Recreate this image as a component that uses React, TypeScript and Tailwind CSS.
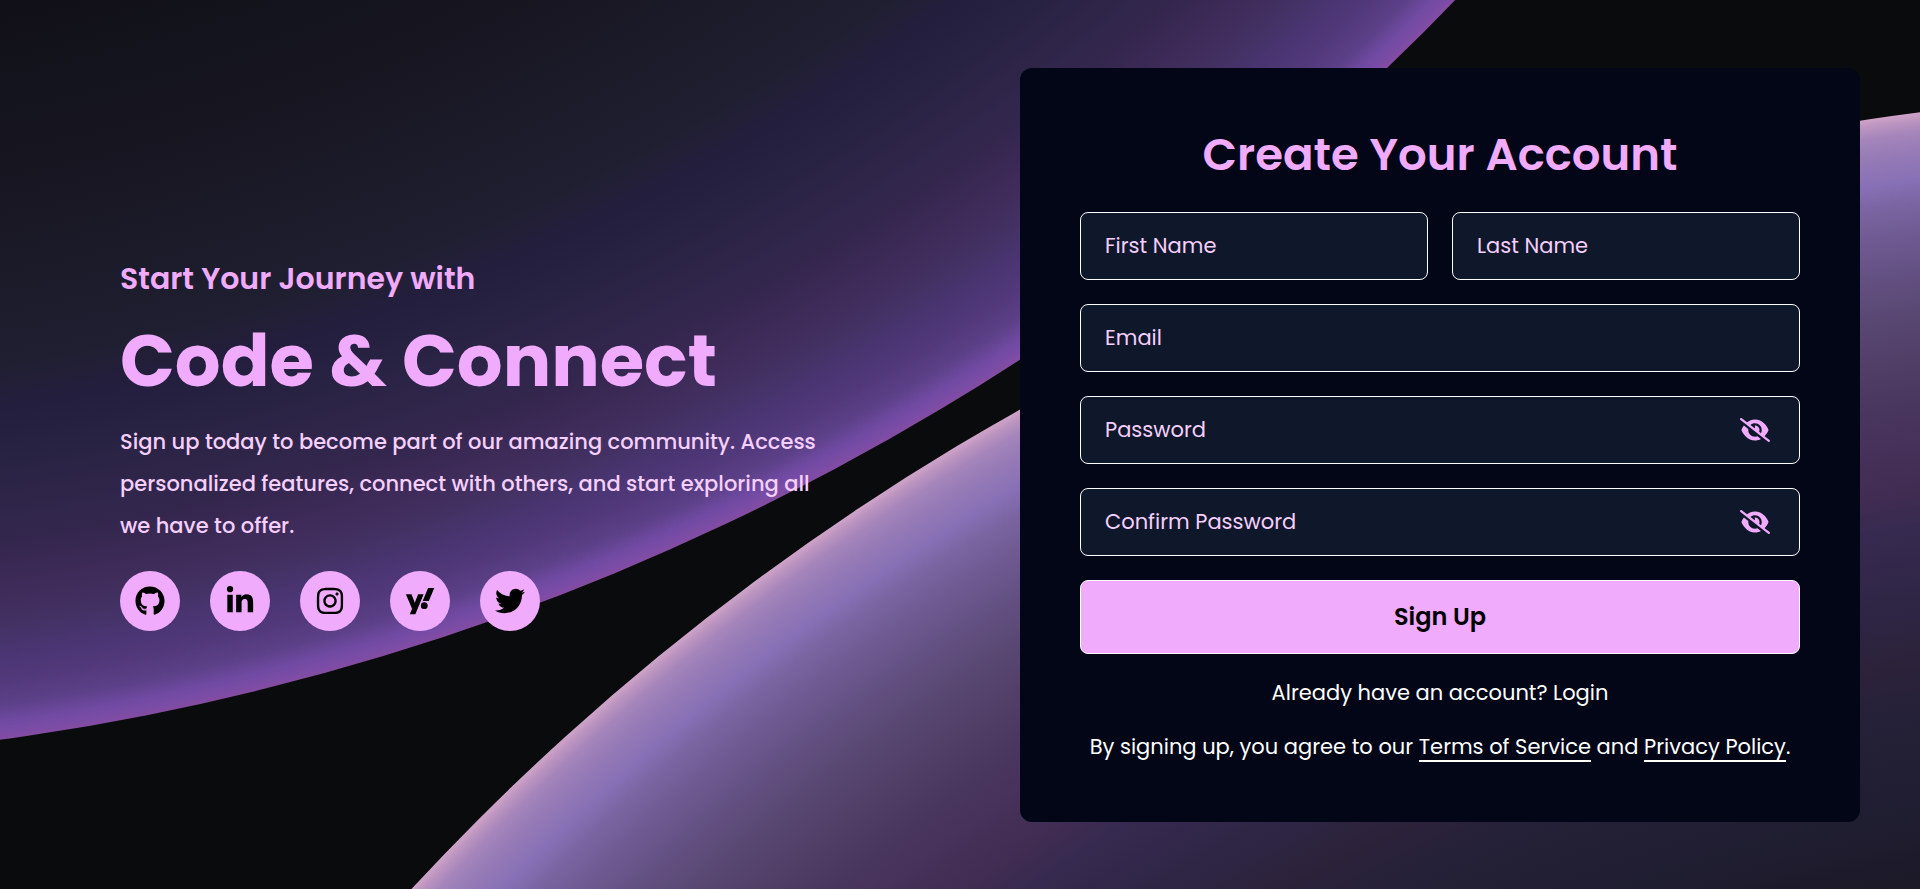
import { useState } from "react";
import {
  FaEyeSlash,
  FaEye,
  FaGithub,
  FaLinkedinIn,
  FaInstagram,
  FaYahoo,
  FaTwitter,
} from "react-icons/fa6";

const socials = [
  { label: "GitHub", Icon: FaGithub },
  { label: "LinkedIn", Icon: FaLinkedinIn },
  { label: "Instagram", Icon: FaInstagram },
  { label: "Yahoo", Icon: FaYahoo },
  { label: "Twitter", Icon: FaTwitter },
];

function Backdrop() {
  return (
    <svg
      aria-hidden="true"
      className="absolute inset-0 -z-10 h-full w-full"
      viewBox="0 0 1920 889"
      preserveAspectRatio="xMidYMid slice"
    >
      <defs>
        <radialGradient id="upper" gradientUnits="userSpaceOnUse" cx="-339" cy="-1728" r="2491">
          <stop offset="0.7" stopColor="#100e15" />
          <stop offset="0.742" stopColor="#13141d" />
          <stop offset="0.775" stopColor="#171520" />
          <stop offset="0.812" stopColor="#1b1a28" />
          <stop offset="0.852" stopColor="#201f32" />
          <stop offset="0.868" stopColor="#241e3e" />
          <stop offset="0.89" stopColor="#292343" />
          <stop offset="0.925" stopColor="#35274f" />
          <stop offset="0.9366" stopColor="#3d2a57" />
          <stop offset="0.954" stopColor="#433163" />
          <stop offset="0.9655" stopColor="#4a3572" />
          <stop offset="0.9755" stopColor="#51387a" />
          <stop offset="0.986" stopColor="#5c4088" />
          <stop offset="0.993" stopColor="#704aa2" />
          <stop offset="0.9975" stopColor="#7b4ca6" />
          <stop offset="1" stopColor="#844ca0" />
        </radialGradient>
        <radialGradient id="lower" gradientUnits="userSpaceOnUse" cx="2236" cy="2579" r="2487">
          <stop offset="0.687" stopColor="#1b1926" />
          <stop offset="0.721" stopColor="#1f1d30" />
          <stop offset="0.762" stopColor="#252138" />
          <stop offset="0.782" stopColor="#2c223a" />
          <stop offset="0.8" stopColor="#2d2543" />
          <stop offset="0.836" stopColor="#372a50" />
          <stop offset="0.849" stopColor="#412c52" />
          <stop offset="0.883" stopColor="#49365f" />
          <stop offset="0.917" stopColor="#57466f" />
          <stop offset="0.936" stopColor="#635082" />
          <stop offset="0.952" stopColor="#6f5b92" />
          <stop offset="0.964" stopColor="#7a65a2" />
          <stop offset="0.973" stopColor="#8770b5" />
          <stop offset="0.984" stopColor="#957ab6" />
          <stop offset="0.992" stopColor="#a585bb" />
          <stop offset="0.997" stopColor="#bd95c0" />
          <stop offset="1" stopColor="#cfa4c8" />
        </radialGradient>
      </defs>
      <rect width="1920" height="889" fill="#0a0b0d" />
      <circle cx="-339" cy="-1728" r="2491" fill="url(#upper)" />
      <circle cx="2236" cy="2579" r="2487" fill="url(#lower)" />
    </svg>
  );
}

const fieldClass =
  "block h-[68px] w-full rounded-lg border border-white bg-[#0f172a] px-6 text-[21px] text-[#f5d0fe] placeholder:text-[#f5d0fe] placeholder:opacity-100 outline-none focus:border-[#f0abfc]";

function Field({ label, type = "text" }: { label: string; type?: string }) {
  return <input type={type} aria-label={label} placeholder={label} className={fieldClass} />;
}

function PasswordField({ label }: { label: string }) {
  const [visible, setVisible] = useState(false);
  const Icon = visible ? FaEye : FaEyeSlash;
  return (
    <div className="relative">
      <Field label={label} type={visible ? "text" : "password"} />
      <button
        type="button"
        aria-label={visible ? "Hide password" : "Show password"}
        onClick={() => setVisible(!visible)}
        className="absolute inset-y-0 right-[30px] flex cursor-pointer items-center text-[#f0abfc]"
      >
        <Icon className="h-6 w-[30px]" />
      </button>
    </div>
  );
}

export default function App() {
  return (
    <main className="relative isolate grid min-h-screen grid-cols-1 items-center overflow-hidden font-['Poppins','Inter',sans-serif] lg:grid-cols-2">
      <Backdrop />
      <section className="px-8 pt-8 pb-[34px] lg:px-[120px]">
        <h2 className="text-[30px] leading-[45px] font-semibold text-[#f0abfc]">
          Start Your Journey with
        </h2>
        <h1 className="mt-3 text-[72px] leading-[96px] font-bold text-[#f0abfc]">
          Code &amp; Connect
        </h1>
        <p className="mt-3 text-[21px] leading-[42px] font-medium text-[#f5d0fe]">
          Sign up today to become part of our amazing community. Access personalized features,
          connect with others, and start exploring all we have to offer.
        </p>
        <ul className="mt-6 flex flex-wrap gap-[30px]">
          {socials.map(({ label, Icon }) => (
            <li key={label}>
              <a
                href="#"
                aria-label={label}
                className="flex size-[60px] items-center justify-center rounded-full bg-[#f0abfc] text-black"
              >
                <Icon className="size-[30px]" />
              </a>
            </li>
          ))}
        </ul>
      </section>
      <section className="px-[60px] py-8">
        <form
          onSubmit={(e) => e.preventDefault()}
          className="rounded-xl bg-[#020617] p-[60px] text-white"
        >
          <h2 className="text-center text-[45px] leading-[54px] font-semibold text-[#f0abfc]">
            Create Your Account
          </h2>
          <div className="mt-[30px] grid gap-6">
            <div className="grid gap-6 sm:grid-cols-2">
              <Field label="First Name" />
              <Field label="Last Name" />
            </div>
            <Field label="Email" type="email" />
            <PasswordField label="Password" />
            <PasswordField label="Confirm Password" />
            <button
              type="submit"
              className="h-[74px] cursor-pointer rounded-lg border border-white bg-[#f0abfc] text-2xl font-semibold text-black"
            >
              Sign Up
            </button>
          </div>
          <p className="mt-6 text-center text-[21px] leading-[30px]">
            Already have an account? <a href="#">Login</a>
          </p>
          <p className="mt-6 text-center text-[21px] leading-[30px]">
            By signing up, you agree to our{" "}
            <a href="#" className="inline-block border-b-2 border-white leading-[26px]">Terms of Service</a> and{" "}
            <a href="#" className="inline-block border-b-2 border-white leading-[26px]">Privacy Policy</a>.
          </p>
        </form>
      </section>
    </main>
  );
}
